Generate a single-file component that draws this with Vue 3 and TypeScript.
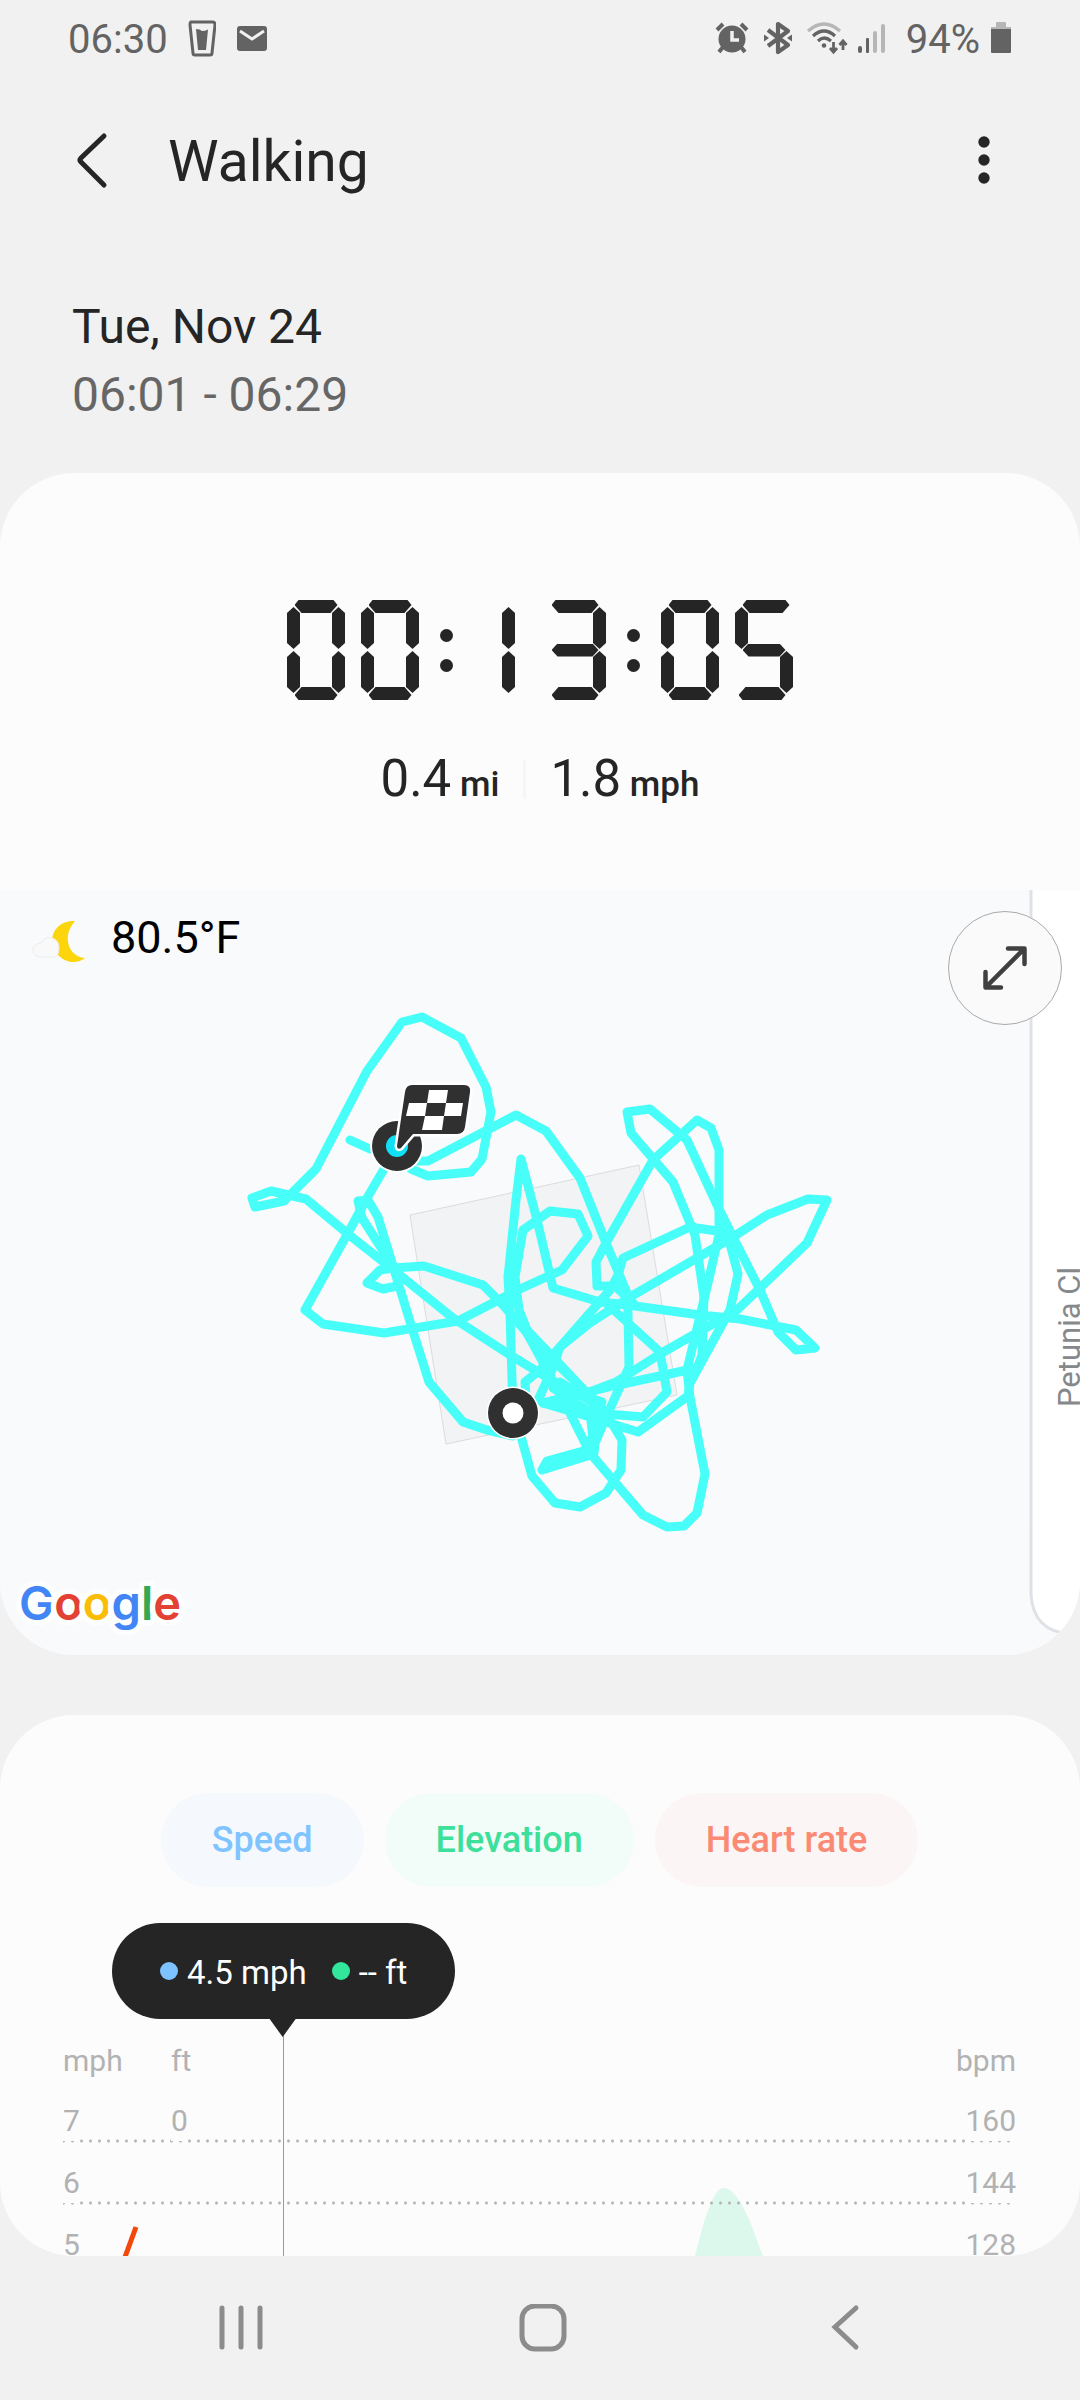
<script setup lang="ts">
interface ChartRow {
  speed: string
  elevation: string
  heart: string
}

// Lit segments of each digit, clockwise from the top bar, middle bar last
const segmentMap: Record<string, string[]> = {
  '0': ['a', 'b', 'c', 'd', 'e', 'f'],
  '1': ['b', 'c'],
  '3': ['a', 'b', 'c', 'd', 'g'],
  '5': ['a', 'c', 'd', 'f', 'g'],
}

const duration = '00:13:05'
const durationChars: string[] = duration.split('')

const chartRows: ChartRow[] = [
  { speed: '7', elevation: '0', heart: '160' },
  { speed: '6', elevation: '', heart: '144' },
  { speed: '5', elevation: '', heart: '128' },
]

// Recorded track, one polyline per stretch
const track: string[] = [
  '397,1158 411,1169 428,1176 471,1172 482,1159 491,1112 486,1087 461,1038 422,1017 402,1022 367,1071 316,1169 284,1201 255,1207 252,1198 271,1191 306,1199 348,1234 391,1268 453,1318 507,1353 543,1375 570,1391 602,1402',
  '350,1140 370,1149 397,1150 416,1161 428,1161 516,1115 546,1131 580,1178 606,1243 627,1293 628,1313 629,1367 607,1415 592,1450',
  '397,1147 367,1198 348,1233 305,1310 323,1324 384,1333 458,1321 520,1289 562,1270 588,1236 578,1214 550,1211 523,1230 515,1277 519,1310 527,1330 553,1357 587,1393 607,1415 622,1440 621,1470 606,1493 580,1507 555,1503 532,1476 522,1440 513,1412',
  '394,1268 362,1218 358,1201 368,1200 378,1217 393,1266 412,1328 429,1382 463,1422 487,1430 513,1436',
  '397,1286 383,1289 367,1283 380,1270 393,1268 424,1266 483,1285 503,1305 528,1334 555,1362 592,1398',
  '513,1412 510,1313 508,1277 516,1200 521,1159 537,1220 553,1288 600,1302 628,1305 700,1315 740,1319 796,1330 815,1348 796,1350 778,1332 760,1290 733,1237 718,1207 687,1140 650,1109 627,1112 631,1133 673,1182 695,1235 704,1297 702,1355 697,1368 613,1386 543,1403',
  '606,1243 653,1160 697,1120 711,1128 719,1150 719,1235 707,1287 687,1370 690,1397 705,1474 697,1513 684,1526 667,1527 643,1515 613,1480 590,1453 570,1413 545,1366 517,1315',
  '606,1243 596,1262 597,1286 615,1286 634,1304',
  '733,1237 717,1231 690,1227 623,1258 618,1275 610,1290 560,1347 552,1370 538,1400',
  '733,1237 767,1215 808,1199 827,1200 807,1243 760,1288 737,1310 660,1354 616,1382 587,1393 543,1403',
  '733,1237 697,1258 630,1297 590,1323 560,1347 540,1370 525,1382 526,1397',
  '605,1302 660,1352 667,1392 643,1417 607,1414 543,1402',
  '729,1240 738,1274 730,1310 690,1383 688,1396 638,1432 600,1420 543,1403',
  '553,1388 590,1412 594,1448',
  '560,1382 604,1410 596,1434',
]
</script>

<template>
  <div class="screen">
    <div class="status">
      <div class="status-group left">
        <span>06:30</span>
        <svg width="28" height="40" viewBox="0 0 28 40" fill="none" aria-hidden="true">
          <path d="M3 2h22q2 0 2 3l-3 28q0 2-2 2H7q-2 0-2-2L2 5q0-3 1-3z" stroke="#636363" stroke-width="3" />
          <path d="M8 9q4 0 6 2q3 0 6-1.500l-2 20.500H10z" fill="#636363" />
        </svg>
        <svg width="32" height="40" viewBox="0 0 32 40" fill="none" aria-hidden="true">
          <rect x="1" y="6" width="30" height="25" rx="3" fill="#636363" />
          <path d="M4 11l12 8 12-8" stroke="#f1f1f1" stroke-width="3" />
        </svg>
      </div>
      <div class="status-group right">
        <svg width="38" height="40" viewBox="0 0 38 40" fill="none" stroke="#636363" aria-hidden="true">
          <circle cx="18" cy="19" r="13.500" fill="#636363" stroke="none" />
          <path d="M3 10l6-6M27 4l6 6" stroke-width="4" />
          <path d="M9 27l-4 5M27 27l4 5" stroke-width="4" />
          <path d="M18 11v9h7" stroke="#f1f1f1" stroke-width="3.500" />
        </svg>
        <svg width="34" height="40" viewBox="0 0 34 40" fill="none" stroke="#636363" aria-hidden="true">
          <path d="M6 10l20 15-10 7V4l10 7-20 15" stroke-width="4.200" stroke-linejoin="round" />
          <path d="M2 14.500l5 3.500-5 3.500zM30 14.500l-5 3.500 5 3.500z" fill="#636363" stroke="none" />
        </svg>
        <svg width="42" height="40" viewBox="0 0 42 40" fill="none" stroke="#636363" aria-hidden="true">
          <path d="M2 11q16-14 32 0" stroke="#b6b6b6" stroke-width="3.200" />
          <path d="M7 16q11-10 22 0" stroke-width="3.200" />
          <path d="M12 21q6-6 13 0" stroke-width="3.200" />
          <circle cx="18" cy="25.500" r="2.300" fill="#636363" stroke="none" />
          <path d="M27.500 22v10M24 28l3.500 4 3.500-4M37 30V21M33.500 25l3.500-4 3.500 4" stroke-width="2.800" />
        </svg>
        <svg width="38" height="40" viewBox="0 0 38 40" aria-hidden="true">
          <rect x="0" y="26" width="4" height="7" rx="2" fill="#636363" />
          <rect x="8" y="18" width="3" height="15" rx="1" fill="#636363" />
          <rect x="15" y="11" width="4" height="22" rx="2" fill="#b6b6b6" />
          <rect x="23" y="4" width="4" height="29" rx="2" fill="#b6b6b6" />
        </svg>
        <span>94%</span>
        <svg width="22" height="40" viewBox="0 0 22 40" aria-hidden="true">
          <path d="M6 7V3q0-1 1-1h8q1 0 1 1v4h5v3H1V7z" fill="#b6b6b6" />
          <path d="M1 9h20v23q0 1-1 1H2q-1 0-1-1z" fill="#636363" />
        </svg>
      </div>
    </div>

    <header class="header">
      <button class="icon-btn back" type="button" aria-label="Navigate up">
        <svg width="36" height="60" viewBox="0 0 36 60" fill="none">
          <path d="M30 4L7 26q-2 2 0 4L30 53" stroke="#252525" stroke-width="5" stroke-linecap="round" />
        </svg>
      </button>
      <h1>Walking</h1>
      <button class="icon-btn more" type="button" aria-label="More options">
        <svg width="16" height="60" viewBox="0 0 16 60" fill="#252525">
          <circle cx="8" cy="10" r="5.700" />
          <circle cx="8" cy="28" r="5.700" />
          <circle cx="8" cy="46" r="5.700" />
        </svg>
      </button>
    </header>

    <section class="when">
      <div class="date">Tue, Nov 24</div>
      <div class="range">06:01 - 06:29</div>
    </section>

    <section class="card summary">
      <div class="clock" role="timer" :aria-label="duration">
        <template v-for="(char, i) in durationChars" :key="i">
          <span v-if="char === ':'" class="colon"><i></i><i></i></span>
          <span v-else class="digit" :class="{ one: char === '1', three: char === '3', five: char === '5' }">
            <i v-for="seg in segmentMap[char]" :key="seg" :class="['seg', seg]"></i>
          </span>
        </template>
      </div>
      <div class="metrics">
        <div>0.4<small> mi</small></div>
        <div class="divider"></div>
        <div>1.8<small> mph</small></div>
      </div>

      <div class="map">
        <svg class="map-canvas" viewBox="0 890 1080 765" role="img" aria-label="Route map">
          <rect x="0" y="890" width="1080" height="765" fill="#f8fafc" />
          <path d="M1031 880V1594q2 38 40 40h20V880z" fill="#fff" stroke="#dfe1e6" stroke-width="3" />
          <text class="street" transform="translate(1080 1407) rotate(-90)">Petunia Cl</text>
          <path d="M410 1215L639 1165L677 1395L446 1444z" fill="#f1f3f4" stroke="#dadbdd" />
          <g fill="none" stroke="#47fff8" stroke-width="9" stroke-linejoin="round" stroke-linecap="round">
            <polyline v-for="(points, i) in track" :key="i" :points="points" />
            <path d="M594 1448L547 1461L542 1470L594 1454L596 1430L586 1450z" fill="#47fff8" />
          </g>
          <circle cx="513" cy="1413" r="26.500" fill="#fff" />
          <circle cx="513" cy="1413" r="25" fill="#303030" />
          <circle cx="513" cy="1413" r="10.500" fill="#fff" />
          <circle cx="397" cy="1146" r="27" fill="#fff" />
          <circle cx="397" cy="1146" r="25" fill="#303030" />
          <circle cx="397" cy="1146" r="11" fill="#10e0f6" />
          <path
            d="M412 1085H464q7 0 6 7L465 1127q-1 7-8 7H413L401 1148q-4 2-4-2L405 1092q1-7 7-7z"
            fill="#303030" stroke="#fff" stroke-width="5" paint-order="stroke"
          />
          <path
            d="M429 1090H448L446 1103H463L461 1116H444L442 1130H422L425 1116H406L409 1103H427zM427 1103L425 1116H444L446 1103z"
            fill="#fff" fill-rule="evenodd"
          />
          <text class="google" x="19" y="1620"><tspan fill="#4285f4">G</tspan><tspan fill="#e34133">o</tspan><tspan fill="#fbbc05">o</tspan><tspan fill="#4285f4">g</tspan><tspan fill="#34a853">l</tspan><tspan fill="#e34133">e</tspan></text>
        </svg>

        <div class="weather">
          <svg width="55" height="53" viewBox="0 0 55 53" aria-hidden="true">
            <path d="M43 10C25 9 16 25 22 38c6 13 22 17 31 9C37 46 29 26 43 10z" fill="#fcd50c" />
            <path d="M8 46q-7-1-7-7t8-7q4-7 11-5 7 2 7 10 0 8-5 9z" fill="#f9f9f9" stroke="#ececec" />
          </svg>
          <span>80.5°F</span>
        </div>

        <button class="expand" type="button" aria-label="Expand map">
          <svg width="48" height="48" viewBox="0 0 48 48" fill="none" stroke="#404040" stroke-width="4.500" stroke-linecap="round" stroke-linejoin="round">
            <path d="M5 43L43 5M27 4.500H43.500V20M4.500 28V43.500H20" />
          </svg>
        </button>
      </div>
    </section>

    <section class="card chart-card">
      <div class="pills">
        <button class="pill speed" type="button">Speed</button>
        <button class="pill elevation" type="button">Elevation</button>
        <button class="pill heart" type="button">Heart rate</button>
      </div>

      <div class="plot">
        <div class="tooltip">
          <span class="value"><i class="dot blue"></i><span>4.5 mph</span></span>
          <span class="value"><i class="dot green"></i><span>-- ft</span></span>
        </div>
        <div class="chart">
          <svg class="series" viewBox="0 0 953 248" preserveAspectRatio="none" aria-hidden="true">
            <path d="M629 248C635 228 638 208 648 184C653 173 656 169 661 169C668 169 673 177 678 184C688 202 692 216 704 248z" fill="#dcf8ed" />
            <path d="M73 208L58 249" stroke="#f4470b" stroke-width="5" fill="none" />
          </svg>
          <table class="axes">
            <thead>
              <tr>
                <th scope="col"><span>mph</span></th>
                <th scope="col"><span>ft</span></th>
                <th scope="col" class="end"><span>bpm</span></th>
              </tr>
            </thead>
            <tbody>
              <tr v-for="row in chartRows" :key="row.speed">
                <td><span>{{ row.speed }}</span></td>
                <td><span>{{ row.elevation }}</span></td>
                <td class="end"><span>{{ row.heart }}</span></td>
              </tr>
            </tbody>
          </table>
        </div>
      </div>
    </section>

    <nav class="navbar" aria-label="System">
      <button class="icon-btn" type="button" aria-label="Recent apps">
        <svg width="48" height="48" viewBox="0 0 48 48" stroke="#8c8c8c" stroke-width="5" stroke-linecap="round">
          <path d="M5 4V43M24 4V43M43 4V43" />
        </svg>
      </button>
      <button class="icon-btn" type="button" aria-label="Home">
        <svg width="48" height="48" viewBox="0 0 48 48" fill="none">
          <rect x="3" y="2" width="42" height="43" rx="13" stroke="#8c8c8c" stroke-width="5" />
        </svg>
      </button>
      <button class="icon-btn" type="button" aria-label="Back">
        <svg width="48" height="48" viewBox="0 0 48 48" fill="none">
          <path d="M35 4L14 23L35 43" stroke="#8c8c8c" stroke-width="5" stroke-linecap="round" />
        </svg>
      </button>
    </nav>
  </div>
</template>

<style>
body {
  background: #f1f1f1;
}
</style>

<style scoped>
.screen {
  display: flex;
  flex-direction: column;
  height: 100vh;
  overflow: hidden;
  background: #f1f1f1;
  color: #252525;
  font-family: Roboto, "Noto Sans", sans-serif;
}

button {
  border: 0;
  padding: 0;
  background: none;
  color: inherit;
  font: inherit;
  cursor: pointer;
}

svg {
  display: block;
  flex: none;
}

.status {
  flex: none;
  display: flex;
  justify-content: space-between;
  align-items: center;
  height: 80px;
  padding: 0 68px;
  color: #636363;
  font-size: 40px;
  line-height: 48px;
}

.status-group {
  display: flex;
  align-items: center;
}

.left {
  gap: 20px;
}

.right {
  gap: 10px;
}

.header {
  flex: none;
  display: flex;
  align-items: center;
  height: 164px;
  padding: 0 88px 0 74px;
}

.icon-btn {
  display: flex;
  align-items: center;
  justify-content: center;
}

.header h1 {
  flex: 1;
  margin: 0 0 0 58px;
  font-size: 57px;
  line-height: 66px;
  font-weight: 400;
}

.when {
  flex: none;
  padding: 49px 72px 44px;
  font-size: 48px;
  line-height: 68px;
}

.range {
  color: #666;
}

.card {
  overflow: hidden;
  border-radius: 74px;
  background: #fcfcfc;
}

.summary {
  flex: none;
  padding-top: 127px;
}

.clock {
  display: flex;
  justify-content: center;
  gap: 16px;
}

.digit {
  display: grid;
  width: 58px;
  height: 100px;
}

.seg {
  grid-area: 1 / 1;
  width: 13px;
  height: 42px;
  background: #252525;
  clip-path: polygon(50% 0, 100% 6px, 100% 36px, 50% 100%, 0 36px, 0 6px);
}

.a,
.d,
.g {
  justify-self: center;
  width: 43px;
  height: 13px;
  clip-path: polygon(0 5px, 4px 0, calc(100% - 4px) 0, 100% 5px, calc(100% - 7px) 100%, 7px 100%);
}

.d {
  align-self: end;
  clip-path: polygon(0 8px, 7px 0, calc(100% - 7px) 0, 100% 8px, calc(100% - 4px) 100%, 4px 100%);
}

.g {
  align-self: center;
  clip-path: polygon(0 50%, 6px 0, calc(100% - 6px) 0, 100% 50%, calc(100% - 6px) 100%, 6px 100%);
}

.b,
.c {
  justify-self: end;
}

.b,
.f {
  margin-top: 7px;
}

.c,
.e {
  align-self: end;
  margin-bottom: 7px;
}

.one .seg {
  margin-right: 17px;
}

/* bars with a free end reach further out on that side */
.three .a,
.three .d,
.three .g,
.five .d {
  width: 47px;
  margin-right: 4px;
}

.five .a {
  width: 47px;
  margin-left: 4px;
}

.colon {
  display: flex;
  flex-direction: column;
  align-items: center;
  justify-content: center;
  gap: 17px;
  width: 23px;
}

.colon i {
  width: 13px;
  height: 13px;
  border-radius: 50%;
  background: #252525;
}

.metrics {
  display: flex;
  justify-content: center;
  align-items: center;
  gap: 24px;
  padding: 48px 0 80px;
  font-size: 51px;
  line-height: 62px;
}

.metrics div {
  flex: none;
}

.metrics small {
  font-size: 35px;
  line-height: 40px;
  font-weight: 500;
}

.metrics .divider {
  width: 3px;
  height: 39px;
  background: #f6f6f6;
}

.map {
  position: relative;
}

.map-canvas {
  width: 100%;
  height: auto;
}

.street {
  fill: #85898c;
  font-size: 31px;
}

.google {
  font-family: Inter, Roboto, sans-serif;
  font-size: 47px;
  font-weight: 600;
  stroke: #fdfefe;
  stroke-width: 11px;
  stroke-linejoin: round;
  paint-order: stroke;
}

.weather {
  position: absolute;
  top: 21px;
  left: 32px;
  display: flex;
  gap: 24px;
  color: #000;
  font-size: 45px;
  line-height: 53px;
}

.expand {
  position: absolute;
  top: 21px;
  right: 18px;
  display: flex;
  align-items: center;
  justify-content: center;
  width: 114px;
  height: 114px;
  border: 1px solid #aaa;
  border-radius: 50%;
  background: #fafafa;
}

.chart-card {
  flex: 1;
  min-height: 0;
  margin-top: 60px;
  padding: 78px 64px 0 63px;
}

.pills {
  display: flex;
  justify-content: center;
  gap: 21px;
}

.pill {
  height: 94px;
  padding: 0 51px;
  border-radius: 47px;
  font-size: 36px;
  line-height: 42px;
  font-weight: 500;
}

.speed {
  background: #f5f9fd;
  color: #80c4ff;
}

.elevation {
  background: #f2fcf8;
  color: #3de09b;
}

.heart {
  background: #fcf5f5;
  color: #fa8a73;
}

.plot {
  display: flex;
  flex-direction: column;
  align-items: flex-start;
  margin-top: 36px;
}

.tooltip {
  position: relative;
  z-index: 1;
  display: flex;
  align-items: center;
  gap: 25px;
  height: 96px;
  margin-left: 49px;
  padding: 0 48px;
  border-radius: 48px;
  background: #252525;
  color: #fff;
  font-size: 33px;
  line-height: 40px;
}

.tooltip::before {
  content: "";
  position: absolute;
  top: 100%;
  left: 50%;
  width: 1px;
  height: 260px;
  margin-left: -1px;
  background: #999;
}

.tooltip::after {
  content: "";
  position: absolute;
  top: 100%;
  left: 50%;
  width: 26px;
  height: 18px;
  margin-left: -14px;
  background: #252525;
  clip-path: polygon(0 0, 100% 0, 50% 100%);
}

.value {
  display: flex;
  align-items: center;
  gap: 9px;
}

.value span {
  padding-top: 4px;
}

.dot {
  width: 18px;
  height: 18px;
  border-radius: 50%;
}

.blue {
  background: #7cc3ff;
}

.green {
  background: #32e69b;
}

.chart {
  display: grid;
  width: 100%;
}

.series,
.axes {
  grid-area: 1 / 1;
  width: 100%;
}

.series {
  height: 248px;
}

.axes {
  position: relative;
  border-collapse: collapse;
  table-layout: fixed;
  color: #b2b2b2;
  font-size: 30px;
  line-height: 40px;
}

.axes tr {
  height: 62px;
}

.axes tbody tr {
  background: radial-gradient(circle, #b6b6b6 1px, transparent 2px) -4px bottom / 9px 4px repeat-x;
}

.axes th,
.axes td {
  width: 108px;
  padding: 0;
  text-align: left;
  vertical-align: bottom;
  font-weight: 400;
}

.axes .end {
  width: auto;
  text-align: right;
}

.axes span {
  display: inline-block;
  vertical-align: bottom;
}

.axes td span {
  margin-bottom: 2px;
  background: #fcfcfc;
}

.navbar {
  flex: none;
  display: flex;
  height: 144px;
  padding: 0 84px 0 90px;
}

.navbar .icon-btn {
  flex: 1;
}
</style>
